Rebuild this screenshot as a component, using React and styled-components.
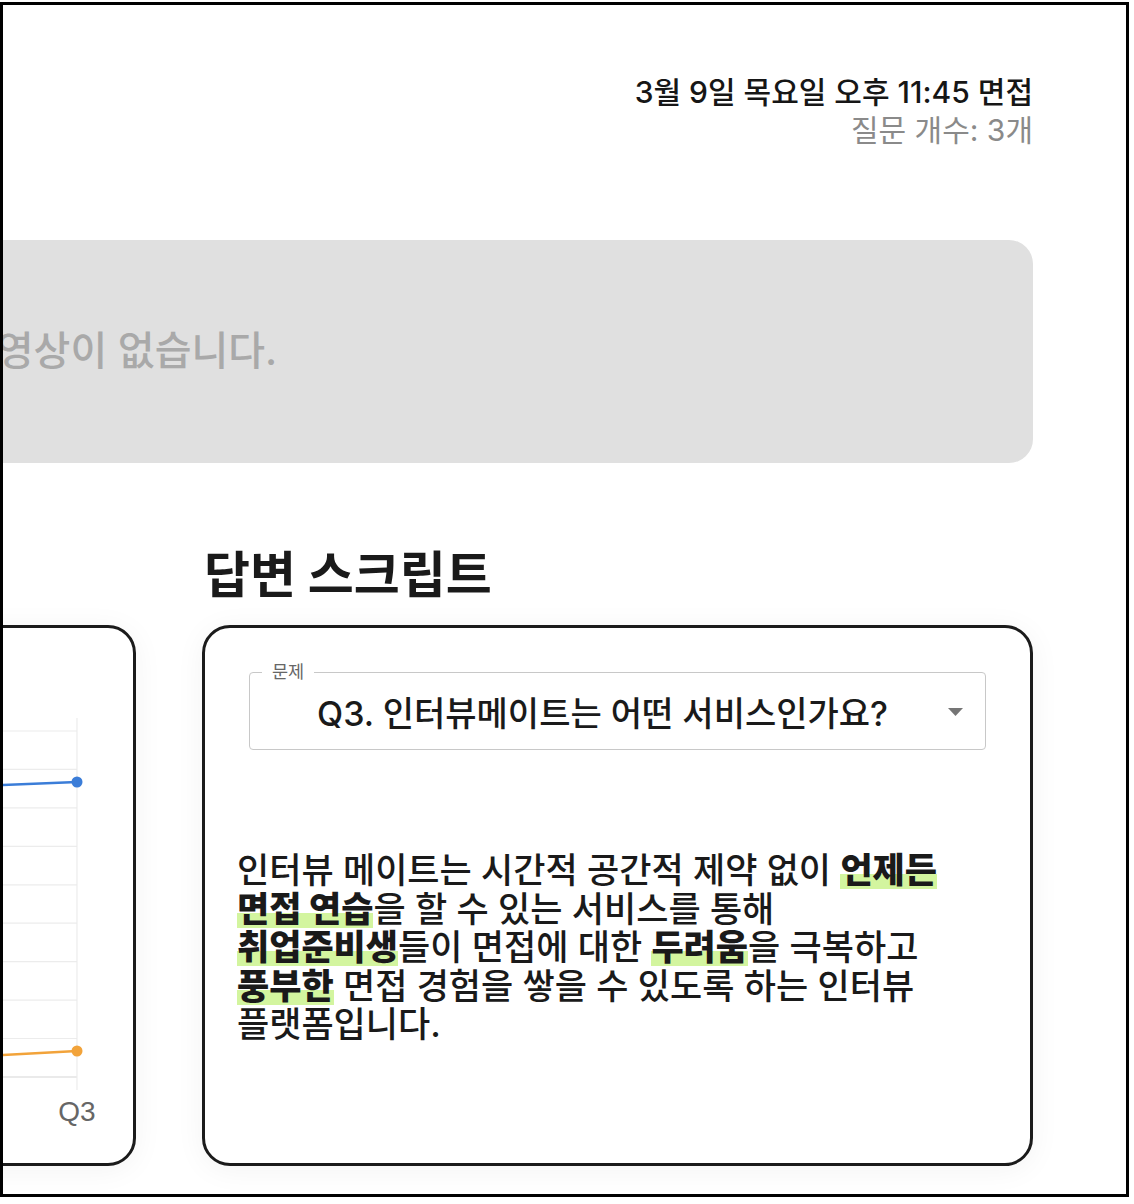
import React from 'react';
import styled, { createGlobalStyle } from 'styled-components';

const GlobalStyle = createGlobalStyle`
  body {
    margin: 0;
    background: #fff;
    font-family: 'Inter', 'Noto Sans CJK KR', sans-serif;
    color: #1a1a1a;
  }
`;

const Q_X = [50, 410, 770];
const GRID_Y = [31, 69.4, 107.9, 146.3, 184.8, 223.2, 261.6, 300.1, 338.5, 377];
const series = [
  { color: '#3b7dd8', points: [120, 96, 82] },
  { color: '#f2a33a', points: [372, 370, 351] },
];

const App = () => {
  return (
    <>
      <GlobalStyle />
      <Frame>
        <Page>
          <Header>
            <DateLine>3월 9일 목요일 오후 11:45 면접</DateLine>
            <CountLine>질문 개수: 3개</CountLine>
          </Header>

          <VideoBox>영상이 없습니다.</VideoBox>

          <Columns>
            <Column>
              <Title>답변 분석</Title>
              <Card>
                <ChartWrap>
                  <svg width='800' height='440' viewBox='0 0 800 440'>
                    {GRID_Y.map((y, i) => (
                      <line
                        key={y}
                        x1='40'
                        x2='770'
                        y1={y}
                        y2={y}
                        stroke={i === GRID_Y.length - 1 ? '#d6d6d6' : '#ececec'}
                        strokeWidth='1.2'
                      />
                    ))}
                    {Q_X.map((x) => (
                      <line key={x} x1={x} x2={x} y1='18' y2='390' stroke='#ececec' strokeWidth='1.2' />
                    ))}
                    {series.map((s) => (
                      <g key={s.color}>
                        <polyline
                          points={s.points.map((y, i) => `${Q_X[i]},${y}`).join(' ')}
                          fill='none'
                          stroke={s.color}
                          strokeWidth='2.5'
                        />
                        {s.points.map((y, i) => (
                          <circle key={i} cx={Q_X[i]} cy={y} r='5.5' fill={s.color} />
                        ))}
                      </g>
                    ))}
                    {Q_X.map((x, i) => (
                      <text key={x} x={x} y='421' textAnchor='middle' fontSize='28' fill='#666' fontFamily='Liberation Sans, sans-serif'>
                        Q{i + 1}
                      </text>
                    ))}
                  </svg>
                </ChartWrap>
              </Card>
            </Column>

            <Column>
              <Title>답변 스크립트</Title>
              <Card padded>
                <SelectBox>
                  <Legend>문제</Legend>
                  <SelectRow>
                    <SelectValue>Q3. 인터뷰메이트는 어떤 서비스인가요?</SelectValue>
                    <Arrow width='15' height='8' viewBox='0 0 15 8'>
                      <path d='M0 0h15L7.5 8z' fill='#757575' />
                    </Arrow>
                  </SelectRow>
                </SelectBox>
                <Script>
                  인터뷰 메이트는 시간적 공간적 제약 없이 <Mark>언제든</Mark>
                  <br />
                  <Mark>면접 연습</Mark>을 할 수 있는 서비스를 통해
                  <br />
                  <Mark>취업준비생</Mark>들이 면접에 대한 <Mark>두려움</Mark>을 극복하고
                  <br />
                  <Mark>풍부한</Mark> 면접 경험을 쌓을 수 있도록 하는 인터뷰
                  <br />
                  플랫폼입니다.
                </Script>
              </Card>
            </Column>
          </Columns>
        </Page>
      </Frame>
    </>
  );
};

const Frame = styled.div`
  width: 1129px;
  height: 1195px;
  margin-top: 2px;
  border: 3px solid #000;
  box-sizing: border-box;
  overflow: hidden;
  display: flex;
  justify-content: flex-end;
  background: #fff;
`;

const Page = styled.main`
  flex: 0 0 1792px;
  margin-right: 93px;
  padding-top: 68px;
  display: flex;
  flex-direction: column;
`;

const Header = styled.header`
  text-align: right;
  font-size: 30px;
  line-height: 38px;
`;

const DateLine = styled.div`
  font-weight: 500;
  color: #161616;
`;

const CountLine = styled.div`
  color: #8a8a8a;
`;

const VideoBox = styled.div`
  margin-top: 91px;
  height: 223px;
  box-sizing: border-box;
  padding-bottom: 8px;
  border-radius: 24px;
  background: #e0e0e0;
  display: flex;
  justify-content: center;
  align-items: center;
  font-size: 40px;
  font-weight: 500;
  color: #a9a9a9;
`;

const Columns = styled.section`
  margin-top: 84px;
  display: grid;
  grid-template-columns: 895px 831px;
  column-gap: 66px;
`;

const Column = styled.div`
  display: flex;
  flex-direction: column;
`;

const Title = styled.h2`
  margin: 0 0 21px;
  padding-left: 2px;
  font-size: 50px;
  line-height: 57px;
  font-weight: 700;
  color: #1a1a1a;
`;

const Card = styled.div`
  height: 541px;
  box-sizing: border-box;
  border: 3px solid #1b1b1b;
  border-radius: 28px;
  background: #fff;
  box-shadow: 0 4px 30px rgba(0, 0, 0, 0.05);
  padding: ${({ padded }) => (padded ? '36px 32px 0' : '0')};
`;

const ChartWrap = styled.div`
  display: flex;
  justify-content: flex-end;
  padding: 72px 26px 0 0;
`;

const SelectBox = styled.fieldset`
  margin: 0 12px;
  padding: 0 0 6px;
  border: 1px solid #c8c8c8;
  border-radius: 4px;
`;

const Legend = styled.legend`
  margin-left: 12px;
  padding: 0 10px;
  font-size: 17.5px;
  line-height: 16px;
  color: #666;
`;

const SelectRow = styled.div`
  height: 63px;
  display: flex;
  align-items: center;
`;

const SelectValue = styled.div`
  flex: 1;
  padding-left: 7px;
  text-align: center;
  font-size: 34px;
  font-weight: 500;
  color: #1a1a1a;
  white-space: nowrap;
`;

const Arrow = styled.svg`
  margin-right: 22px;
  flex-shrink: 0;
`;

const Script = styled.p`
  margin: 101px 0 0;
  font-size: 35px;
  line-height: 38.5px;
  font-weight: 500;
  color: #1a1a1a;
  white-space: nowrap;
`;

const Mark = styled.strong`
  font-weight: 800;
  background: linear-gradient(transparent 60%, #d3f59f 60%, #d3f59f 96%, transparent 96%);
`;

export default App;
